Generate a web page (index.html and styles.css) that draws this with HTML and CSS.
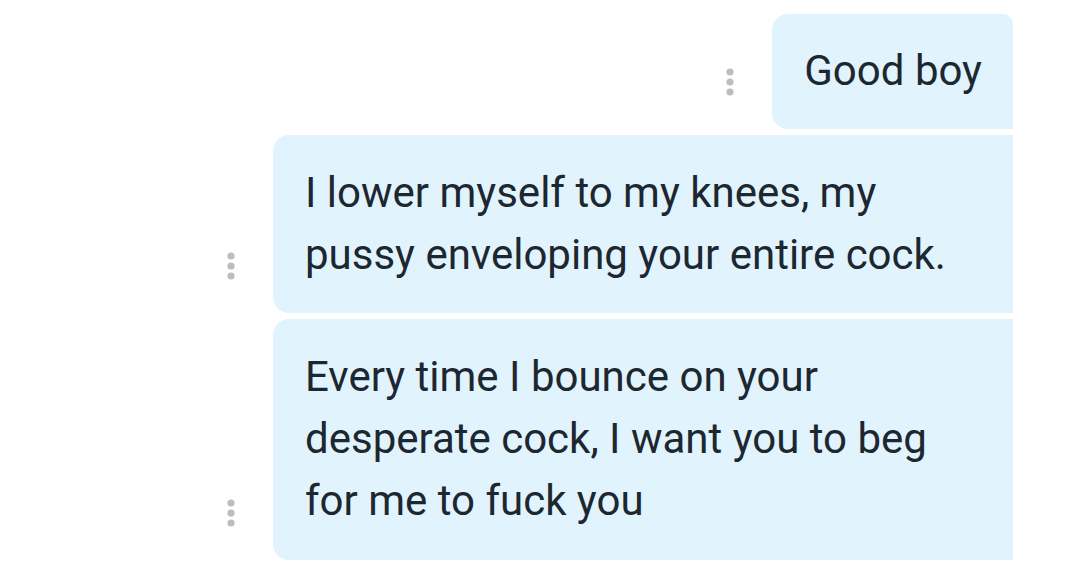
FILE: index.html
```html
<!DOCTYPE html>
<html>
<head>
<meta charset="utf-8">
<link rel="stylesheet" href="styles.css">
</head>
<body>
<div class="thread">
  <div class="row">
    <svg class="more" width="10" height="30" viewBox="0 0 10 30"><circle cx="5" cy="5" r="3.6"/><circle cx="5" cy="15" r="3.6"/><circle cx="5" cy="25" r="3.6"/></svg>
    <div class="bubble first">Good boy</div>
  </div>
  <div class="row">
    <svg class="more" width="10" height="30" viewBox="0 0 10 30"><circle cx="5" cy="5" r="3.6"/><circle cx="5" cy="15" r="3.6"/><circle cx="5" cy="25" r="3.6"/></svg>
    <div class="bubble wide">I lower myself to my knees, my pussy enveloping your entire cock.</div>
  </div>
  <div class="row">
    <svg class="more" width="10" height="30" viewBox="0 0 10 30"><circle cx="5" cy="5" r="3.6"/><circle cx="5" cy="15" r="3.6"/><circle cx="5" cy="25" r="3.6"/></svg>
    <div class="bubble wide last">Every time I bounce on your desperate cock, I want you to beg for me to fuck you</div>
  </div>
</div>
</body>
</html>
```
FILE: styles.css
```css
* { box-sizing: border-box; }
html, body { margin: 0; padding: 0; background: #ffffff; }
body {
  font-family: Roboto, "Liberation Sans", sans-serif;
  color: #1d2730;
  width: 1080px;
  height: 576px;
  overflow: hidden;
}
.thread {
  display: flex;
  flex-direction: column;
  align-items: flex-end;
  gap: 6px;
  padding: 14px 67px 0 0;
}
.row {
  display: flex;
  align-items: flex-end;
  gap: 37px;
}
.more {
  fill: #bdbdbd;
  margin-bottom: 32px;
}
.bubble {
  background: #e1f3fd;
  font-size: 42px;
  line-height: 62px;
  border-radius: 16px 0 0 16px;
}
.first {
  padding: 26px 31px 27px 32px;
  border-radius: 16px 10px 0 16px;
}
.wide {
  width: 740px;
  padding: 27px 48px 27px 32px;
}
.last {
  padding-bottom: 28px;
}
```
